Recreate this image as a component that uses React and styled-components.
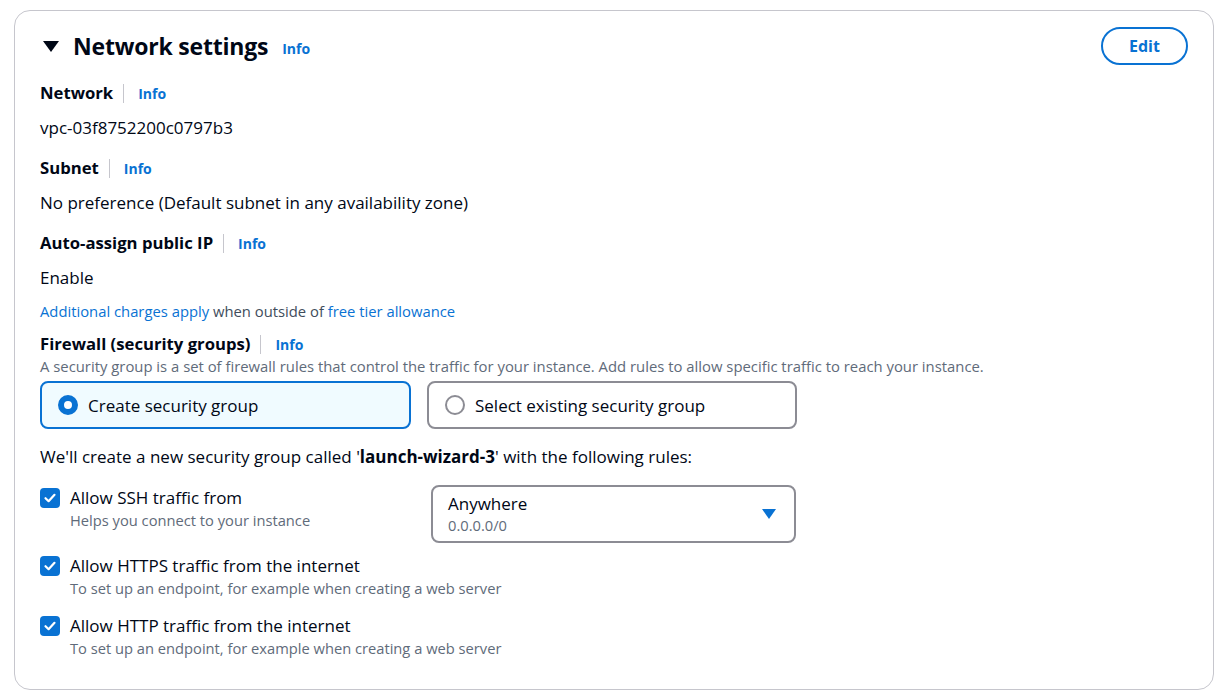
import React from 'react';
import styled, { createGlobalStyle } from 'styled-components';

const GlobalStyle = createGlobalStyle`
  body {
    margin: 0;
    background: #ffffff;
    font-family: "Open Sans", "Noto Sans", Arial, sans-serif;
    color: #000716;
  }
`;

const Page = styled.div`
  padding: 10px 14px 9px 14px;
`;

const Card = styled.section`
  border: 1px solid #c6c6cd;
  border-radius: 16px;
  padding: 16px 25px 31px 25px;
  box-sizing: border-box;
`;

const Header = styled.div`
  display: flex;
  align-items: center;
  justify-content: space-between;
`;

const TitleGroup = styled.div`
  display: flex;
  align-items: center;
  padding-left: 3px;
`;

const Caret = styled.span`
  width: 0;
  height: 0;
  border-left: 8px solid transparent;
  border-right: 8px solid transparent;
  border-top: 11px solid #000716;
  margin-right: 14px;
  margin-top: 1px;
`;

const Title = styled.h2`
  margin: 0;
  font-size: 23px;
  font-weight: 700;
  letter-spacing: -0.2px;
  line-height: 36px;
`;

const InfoLink = styled.a`
  color: #0972d3;
  font-size: 14px;
  font-weight: 700;
  text-decoration: none;
  margin-left: ${(p) => p.$gap || 14}px;
  margin-top: ${(p) => p.$top || 0}px;
`;

const EditButton = styled.button`
  font-family: inherit;
  font-size: 16px;
  font-weight: 700;
  color: #0972d3;
  background: #fff;
  border: 2px solid #0972d3;
  border-radius: 20px;
  width: 87px;
  height: 38px;
  cursor: pointer;
`;

const Field = styled.div`
  margin-top: ${(p) => p.$top}px;
`;

const LabelRow = styled.div`
  display: flex;
  align-items: center;
  height: 22px;
`;

const Label = styled.span`
  font-size: 16.7px;
  font-weight: 700;
  line-height: 22px;
`;

const Divider = styled.span`
  width: 1px;
  height: 19px;
  background: #c6c6cd;
  margin-left: 10px;
`;

const Value = styled.div`
  font-size: 17px;
  line-height: 22px;
  margin-top: 13px;
`;

const Note = styled.div`
  font-size: 14.8px;
  line-height: 20px;
  color: #414d5c;
  margin-top: 12px;
`;

const Link = styled.a`
  color: #0972d3;
  text-decoration: none;
`;

const Description = styled.div`
  font-size: 14.85px;
  line-height: 20px;
  color: #5f6b7a;
  margin-top: 1px;
`;

const Tiles = styled.div`
  display: grid;
  grid-template-columns: 371px 370px;
  gap: 16px;
  margin-top: 5px;
`;

const Tile = styled.div`
  display: flex;
  align-items: center;
  height: 48px;
  box-sizing: border-box;
  padding: 0 16px;
  border-radius: 8px;
  border: ${(p) => (p.$selected ? '2px solid #0972d3' : '2px solid #8c8c94')};
  background: ${(p) => (p.$selected ? '#f0fbff' : '#ffffff')};
  font-size: 17px;
  gap: 10px;
`;

const Radio = styled.span`
  width: 20px;
  height: 20px;
  box-sizing: border-box;
  border-radius: 50%;
  border: ${(p) => (p.$checked ? '6px solid #0972d3' : '2px solid #8c8c94')};
  background: #fff;
  flex: none;
`;

const Sentence = styled.div`
  font-size: 17px;
  line-height: 22px;
  margin-top: 17px;
`;

const RuleList = styled.div`
  display: flex;
  flex-direction: column;
  gap: 17px;
  margin-top: 19px;
`;

const RuleRow = styled.div`
  display: flex;
  align-items: flex-start;
`;

const CheckLine = styled.div`
  display: flex;
  align-items: flex-start;
  gap: 10px;
  width: ${(p) => (p.$fixed ? '391px' : 'auto')};
  flex: none;
`;

const Box = styled.span`
  width: 20px;
  height: 20px;
  border-radius: 4px;
  background: #0972d3;
  display: flex;
  align-items: center;
  justify-content: center;
  flex: none;
  margin-top: 1px;
`;

const CheckText = styled.div`
  display: flex;
  flex-direction: column;
`;

const CheckLabel = styled.span`
  font-size: 17px;
  line-height: 22px;
`;

const CheckHint = styled.span`
  font-size: 14.7px;
  line-height: 20px;
  color: #5f6b7a;
  margin-top: 1px;
`;

const Select = styled.div`
  display: flex;
  align-items: center;
  justify-content: space-between;
  width: 365px;
  height: 58px;
  box-sizing: border-box;
  border: 2px solid #8c8c94;
  border-radius: 8px;
  padding: 0 18px 0 15px;
  margin-top: -2px;
  margin-bottom: -5px;
`;

const SelectText = styled.div`
  display: flex;
  flex-direction: column;
`;

const SelectValue = styled.span`
  font-size: 17px;
  line-height: 22px;
`;

const SelectSub = styled.span`
  font-size: 14.7px;
  line-height: 20px;
  color: #5f6b7a;
`;

const DropArrow = styled.span`
  width: 0;
  height: 0;
  border-left: 7px solid transparent;
  border-right: 7px solid transparent;
  border-top: 10px solid #0972d3;
`;

const Check = () => (
  <Box>
    <svg width="14" height="14" viewBox="0 0 14 14" fill="none">
      <path d="M2.5 7.2 L5.6 10.2 L11.5 3.8" stroke="#fff" strokeWidth="2.2" strokeLinecap="round" strokeLinejoin="round" />
    </svg>
  </Box>
);

const LabelWithInfo = ({ children }) => (
  <LabelRow>
    <Label>{children}</Label>
    <Divider />
    <InfoLink $gap={14} $top={1}>Info</InfoLink>
  </LabelRow>
);

const rules = [
  { label: 'Allow SSH traffic from', hint: 'Helps you connect to your instance', select: true },
  { label: 'Allow HTTPS traffic from the internet', hint: 'To set up an endpoint, for example when creating a web server' },
  { label: 'Allow HTTP traffic from the internet', hint: 'To set up an endpoint, for example when creating a web server' },
];

export default function App() {
  return (
    <Page>
      <GlobalStyle />
      <Card>
        <Header>
          <TitleGroup>
            <Caret />
            <Title>Network settings</Title>
            <InfoLink $gap={14} $top={4}>Info</InfoLink>
          </TitleGroup>
          <EditButton>Edit</EditButton>
        </Header>

        <Field $top={17}>
          <LabelWithInfo>Network</LabelWithInfo>
          <Value>vpc-03f8752200c0797b3</Value>
        </Field>

        <Field $top={18}>
          <LabelWithInfo>Subnet</LabelWithInfo>
          <Value>No preference (Default subnet in any availability zone)</Value>
        </Field>

        <Field $top={18}>
          <LabelWithInfo>Auto-assign public IP</LabelWithInfo>
          <Value>Enable</Value>
          <Note>
            <Link>Additional charges apply</Link> when outside of <Link>free tier allowance</Link>
          </Note>
        </Field>

        <Field $top={12}>
          <LabelWithInfo>Firewall (security groups)</LabelWithInfo>
          <Description>
            A security group is a set of firewall rules that control the traffic for your instance. Add rules to allow specific traffic to reach your instance.
          </Description>
          <Tiles>
            <Tile $selected>
              <Radio $checked />
              Create security group
            </Tile>
            <Tile>
              <Radio />
              Select existing security group
            </Tile>
          </Tiles>
        </Field>

        <Sentence>
          We'll create a new security group called '<b>launch-wizard-3</b>' with the following rules:
        </Sentence>

        <RuleList>
          {rules.map((r) => (
            <RuleRow key={r.label}>
              <CheckLine $fixed={r.select}>
                <Check />
                <CheckText>
                  <CheckLabel>{r.label}</CheckLabel>
                  <CheckHint>{r.hint}</CheckHint>
                </CheckText>
              </CheckLine>
              {r.select && (
                <Select>
                  <SelectText>
                    <SelectValue>Anywhere</SelectValue>
                    <SelectSub>0.0.0.0/0</SelectSub>
                  </SelectText>
                  <DropArrow />
                </Select>
              )}
            </RuleRow>
          ))}
        </RuleList>
      </Card>
    </Page>
  );
}
